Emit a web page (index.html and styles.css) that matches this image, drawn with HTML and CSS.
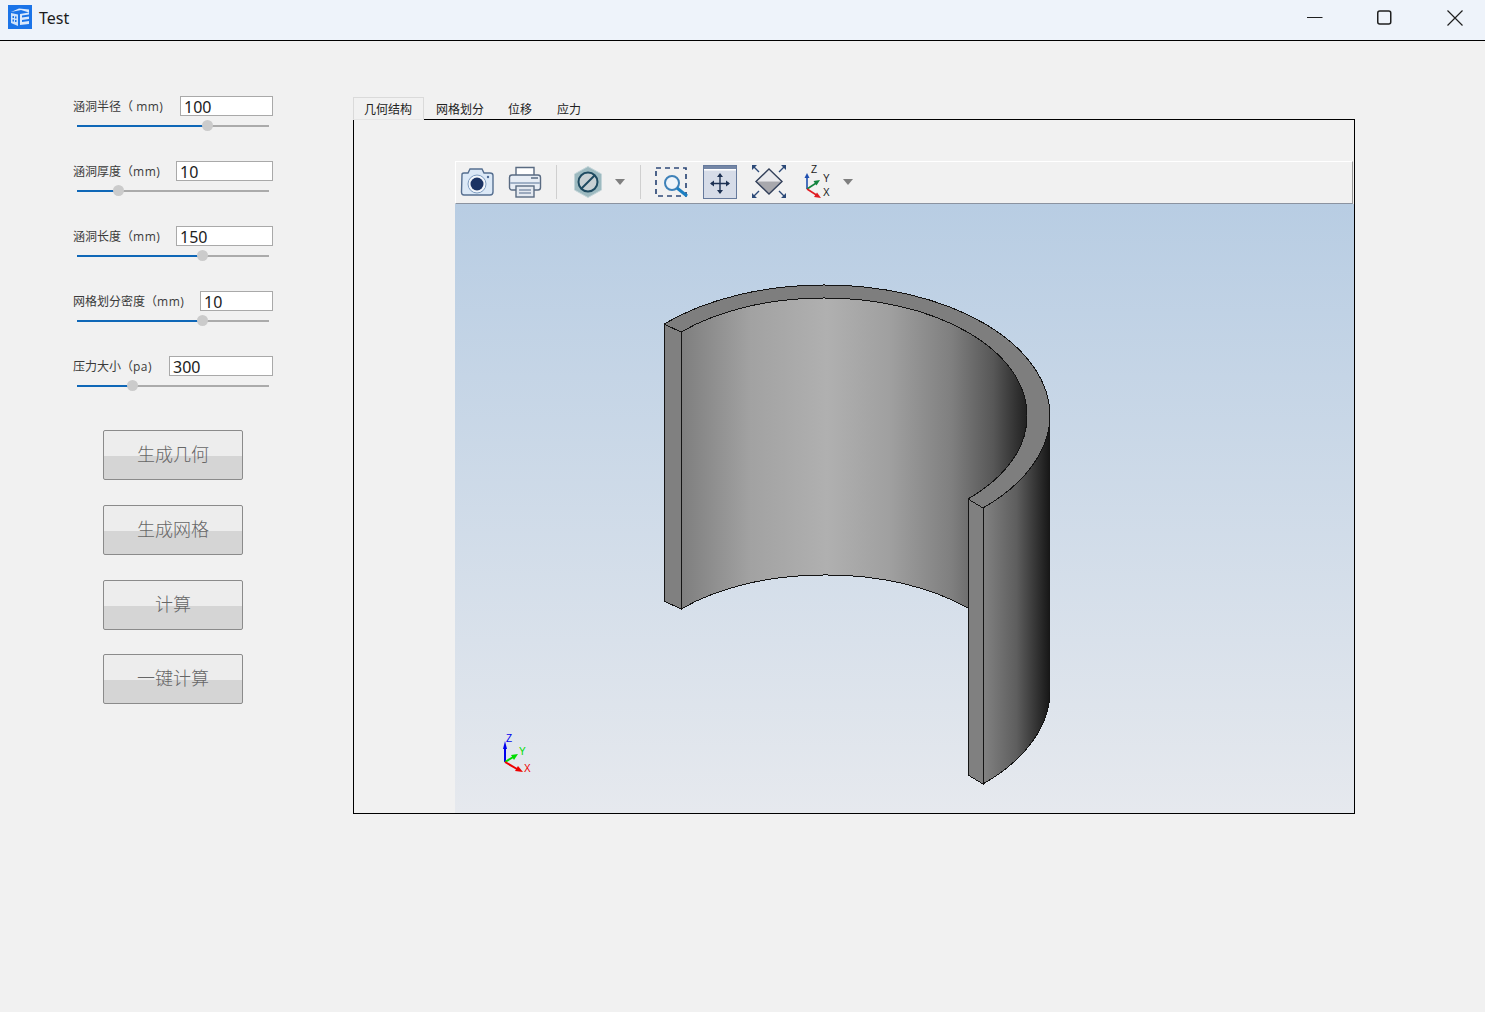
FILE: index.html
```html
<!DOCTYPE html>
<html lang="zh-CN">
<head>
<meta charset="utf-8">
<title>Test</title>
<link rel="stylesheet" href="styles.css">
</head>
<body>
<header class="titlebar">
  <svg class="app-icon" width="24" height="24" viewBox="0 0 24 24">
    <rect width="24" height="24" fill="#1b74e8"/>
    <path d="M3 7 11 3.500 21 4.500 21 7.500 12 9 12 20 21 19 21 16 14 17 14 15 21 14 21 11.500 14 12.500 14 10.500 21 9.500 21 7.500 13 5 3 7Z" fill="#dbe9fb"/>
    <path d="M3 8 10 9.500 10 21 3 18Z" fill="#cfe2fa"/>
    <path d="M4.500 11h1.500v2h-1.500zM7 11.500h1.500v2h-1.500zM4.500 14.500h1.500v2h-1.500zM7 15h1.500v2h-1.500z" fill="#1b74e8"/>
  </svg>
  <span class="app-title">Test</span>
  <div class="window-controls">
    <svg width="16" height="16" viewBox="0 0 16 16"><path d="M0 7.500H15.500" stroke="#1f1f1f" fill="none"/></svg>
    <svg width="16" height="16" viewBox="0 0 16 16"><rect x=".75" y="1" width="13" height="13" rx="2" stroke="#1f1f1f" stroke-width="1.500" fill="none"/></svg>
    <svg width="16" height="16" viewBox="0 0 16 16"><path d="M0.500 0.500 15.500 15.500M15.500 0.500 0.500 15.500" stroke="#1f1f1f" stroke-width="1.200" fill="none"/></svg>
  </div>
</header>

<main class="app">
  <aside class="sidebar">
    <section class="param">
      <div class="param-head"><label class="param-label">涵洞半径（ <span class="unit">mm)</span></label><span class="field field-a">100</span></div>
      <div class="slider"><span class="fill" style="width:130px"></span><span class="thumb"></span><span class="rest"></span></div>
    </section>
    <section class="param">
      <div class="param-head"><label class="param-label">涵洞厚度（<span class="unit">mm)</span></label><span class="field field-b">10</span></div>
      <div class="slider"><span class="fill" style="width:41px"></span><span class="thumb"></span><span class="rest"></span></div>
    </section>
    <section class="param">
      <div class="param-head"><label class="param-label">涵洞长度（<span class="unit">mm)</span></label><span class="field field-b">150</span></div>
      <div class="slider"><span class="fill" style="width:125px"></span><span class="thumb"></span><span class="rest"></span></div>
    </section>
    <section class="param">
      <div class="param-head"><label class="param-label">网格划分密度（<span class="unit">mm)</span></label><span class="field field-c">10</span></div>
      <div class="slider"><span class="fill" style="width:125px"></span><span class="thumb"></span><span class="rest"></span></div>
    </section>
    <section class="param">
      <div class="param-head"><label class="param-label">压力大小（<span class="unit">pa)</span></label><span class="field field-d">300</span></div>
      <div class="slider"><span class="fill" style="width:55px"></span><span class="thumb"></span><span class="rest"></span></div>
    </section>
    <div class="actions">
      <button class="action">生成几何</button>
      <button class="action">生成网格</button>
      <button class="action">计算</button>
      <button class="action action-last">一键计算</button>
    </div>
  </aside>

  <section class="workspace">
    <nav class="tabs">
      <span class="tab tab-active">几何结构</span>
      <span class="tab tab-b">网格划分</span>
      <span class="tab tab-c">位移</span>
      <span class="tab tab-d">应力</span>
    </nav>
    <div class="viewer">
      <div class="scene">
        <div class="toolbar">
          <svg class="tool t-camera" width="34" height="30" viewBox="0 0 34 30">
            <path d="M2 7.500Q2 6 4 6H8L10 2H22L24 6H30Q33 6 33 8.500V25Q33 28 30 28H4Q1.500 28 1.500 25Z" fill="#dce9f7" stroke="#566f90" stroke-width="1.400"/>
            <circle cx="17" cy="17" r="9" fill="#f2f6fb" stroke="#7f9dc0"/>
            <circle cx="17" cy="17" r="6.500" fill="#1b3364"/>
            <circle cx="28" cy="10" r="1.200" fill="#4d6a96"/>
          </svg>
          <svg class="tool t-printer" width="34" height="32" viewBox="0 0 34 32">
            <path d="M8 9V1.500H26V9" fill="#fff" stroke="#5a6b82" stroke-width="1.400"/>
            <rect x="1.500" y="9" width="31" height="15" rx="2.500" fill="#e7edf5" stroke="#5a6b82" stroke-width="1.400"/>
            <path d="M2 16H32V18H2Z" fill="#9fb0c6"/>
            <path d="M23 12H30" stroke="#5a6b82" stroke-width="1.500"/>
            <rect x="8" y="20" width="18" height="11" fill="#e4e9f0" stroke="#5a6b82" stroke-width="1.400"/>
            <path d="M11 24H23M11 27H23" stroke="#8294ac" stroke-width="1.300"/>
          </svg>
          <span class="tool-sep sep-a"></span>
          <svg class="tool t-hex" width="28" height="32" viewBox="0 0 28 32">
            <path d="M14 .5 27.500 8V24L14 31.500 .5 24V8Z" fill="#9dbac0" stroke="#c3d4d8"/>
            <circle cx="14" cy="16" r="9.500" fill="#c8d0d3" stroke="#1e4a60" stroke-width="2"/>
            <path d="M7.500 22.500 20.500 9.500" stroke="#1e4a60" stroke-width="2"/>
          </svg>
          <svg class="tool t-caret" width="10" height="6" viewBox="0 0 10 6"><path d="M0 0H10L5 6Z" fill="#7f7f7f"/></svg>
          <span class="tool-sep sep-b"></span>
          <svg class="tool t-zoom" width="34" height="32" viewBox="0 0 34 32">
            <rect x="1" y="2" width="30" height="28" fill="none" stroke="#2f4a78" stroke-width="1.700" stroke-dasharray="5 4"/>
            <circle cx="17" cy="17" r="7" fill="#eef4fa" stroke="#3e81b8" stroke-width="2"/>
            <path d="M22 22 32 30" stroke="#1b7fc2" stroke-width="3"/>
          </svg>
          <svg class="tool t-pan" width="34" height="34" viewBox="0 0 34 34">
            <rect x=".5" y=".5" width="33" height="33" fill="#d6dce8" stroke="#667a9c"/>
            <rect x="1" y="1" width="32" height="3" fill="#7587a6"/>
            <rect x="1" y="4" width="32" height="1.500" fill="#fff"/>
            <path d="M17 9V28M8 18.500H26" stroke="#1d3153" stroke-width="1.400"/>
            <path d="M17 8 14 12H20ZM17 29 14 25H20ZM7 18.500 11 15.500V21.500ZM27 18.500 23 15.500V21.500Z" fill="#1d3153"/>
          </svg>
          <svg class="tool t-fit" width="34" height="33" viewBox="0 0 34 33">
            <path d="M17 4 30 16.500H4Z" fill="#e9e9ec"/>
            <path d="M4 16.500H30L17 29Z" fill="#a8a8ad"/>
            <path d="M17 4 30 16.500 17 29 4 16.500Z" fill="none" stroke="#33405a" stroke-width="1.400"/>
            <path d="M1 1 7 7M33 1 27 7M1 32 7 26M33 32 27 26" stroke="#2c4a78" stroke-width="1.400"/>
            <path d="M0 0H5L0 5ZM34 0H29L34 5ZM0 33H5L0 28ZM34 33H29L34 28Z" fill="#2c4a78"/>
          </svg>
          <svg class="tool t-axes" width="30" height="34" viewBox="0 0 30 34">
            <path d="M3 24V10" stroke="#1f4fb0" stroke-width="1.600"/>
            <path d="M3 8 .5 13H5.500Z" fill="#1f4fb0"/>
            <path d="M3 24 13 17.500" stroke="#12843f" stroke-width="1.600"/>
            <path d="M16 15 9.500 16 12.500 20.500Z" fill="#12843f"/>
            <path d="M3 24 14 31" stroke="#e01b22" stroke-width="1.600"/>
            <path d="M17 33 10 32 13 27.500Z" fill="#e01b22"/>
            <text class="axis-label" x="7" y="8">Z</text>
            <text class="axis-label" x="19" y="17">Y</text>
            <text class="axis-label" x="19" y="31">X</text>
          </svg>
          <svg class="tool t-caret2" width="10" height="6" viewBox="0 0 10 6"><path d="M0 0H10L5 6Z" fill="#7f7f7f"/></svg>
        </div>
        <svg class="model" width="899" height="609" viewBox="455 204 899 609">
          <defs>
            <linearGradient id="inner" gradientUnits="userSpaceOnUse" x1="681" y1="0" x2="1028" y2="0">
              <stop offset="0" stop-color="#7e7e7e"/>
              <stop offset=".2" stop-color="#a2a2a2"/>
              <stop offset=".42" stop-color="#b0b0b0"/>
              <stop offset=".6" stop-color="#a0a0a0"/>
              <stop offset=".78" stop-color="#7f7f7f"/>
              <stop offset=".9" stop-color="#575757"/>
              <stop offset="1" stop-color="#1f1f1f"/>
            </linearGradient>
            <linearGradient id="outer" gradientUnits="userSpaceOnUse" x1="983" y1="0" x2="1050" y2="0">
              <stop offset="0" stop-color="#828282"/>
              <stop offset=".5" stop-color="#5e5e5e"/>
              <stop offset="1" stop-color="#161616"/>
            </linearGradient>
          </defs>
          <g class="solid">
            <path d="M968 499 1027 415 1050 416V692A225 131 0 0 1 983 784L968 775Z" fill="url(#outer)"/>
            <path d="M681 332A202 117 0 0 1 825 298A202 117 0 0 1 1027 415A202 117 0 0 1 968 499V608A202 117 0 0 0 825 575A202 117 0 0 0 681 609Z" fill="url(#inner)"/>
            <path d="M664 324A225 131 0 0 1 825 285A225 131 0 0 1 1050 416A225 131 0 0 1 983 508L968 499A202 117 0 0 0 1027 415A202 117 0 0 0 825 298A202 117 0 0 0 681 332Z" fill="#7e7e7e"/>
            <path d="M664 324 681 332V609L664 601Z" fill="#808080"/>
            <path d="M968 499 983 508V784L968 775Z" fill="#808080"/>
          </g>
          <g class="edges">
            <path d="M664 324A225 131 0 0 1 825 285A225 131 0 0 1 1050 416A225 131 0 0 1 983 508L968 499A202 117 0 0 0 1027 415A202 117 0 0 0 825 298A202 117 0 0 0 681 332Z"/>
            <path d="M664 324V601L681 609V332"/>
            <path d="M681 609A202 117 0 0 1 825 575A202 117 0 0 1 968 608"/>
            <path d="M968 499V775L983 784V508"/>
            <path d="M983 784A225 131 0 0 0 1050 692V416"/>
          </g>
          <path d="M505 762V746" stroke="#0000ee" stroke-width="2"/>
          <path d="M505 741 503 749H507Z" fill="#0000ee"/>
          <path d="M505 762 515 756" stroke="#00dd00" stroke-width="2"/>
          <path d="M518 754 511 755 514 760Z" fill="#00dd00"/>
          <path d="M505 762 517 769" stroke="#ee0000" stroke-width="2"/>
          <path d="M523 772 515 771 518 766Z" fill="#ee0000"/>
          <text class="mini-label z" x="506" y="742">Z</text>
          <text class="mini-label y" x="519" y="755">Y</text>
          <text class="mini-label x" x="524" y="772">X</text>
        </svg>
      </div>
    </div>
  </section>
</main>
</body>
</html>
```

FILE: styles.css
```css
* { box-sizing: border-box; }

html, body {
  margin: 0;
  height: 100%;
}

body {
  background: #f1f1f1;
  font-family: "Open Sans", "Noto Sans CJK SC", sans-serif;
  overflow: hidden;
}

.titlebar {
  display: flex;
  align-items: center;
  height: 41px;
  padding: 0 22px 6px 8px;
  background: #eef3fa;
  border-bottom: 1px solid #000;
}

.app-icon { display: block; }

.app-title {
  margin: 1px 0 0 7px;
  font: 16px "Noto Sans", "Open Sans", sans-serif;
  color: #1c1c1c;
}

.window-controls {
  display: flex;
  gap: 54px;
  margin-left: auto;
  padding-top: 2px;
}

.app {
  display: flex;
}

.sidebar {
  width: 353px;
  padding: 55px 0 0 73px;
  flex: none;
}

.param {
  width: 200px;
  height: 65px;
}

.param-head {
  display: flex;
  align-items: center;
  justify-content: space-between;
  height: 20px;
}

.param-label {
  padding-top: 2px;
  font-size: 12px;
  line-height: 20px;
  color: #3a3a3a;
  white-space: nowrap;
}

.unit { letter-spacing: .5px; }

.field {
  height: 20px;
  padding-left: 3px;
  background: #fff;
  border: 1px solid #a9a9a9;
  font: 16px/21px "Noto Sans", "Open Sans", sans-serif;
  color: #222;
}

.field-a { width: 93px; }
.field-b { width: 97px; }
.field-c { width: 73px; }
.field-d { width: 104px; }

.slider {
  display: flex;
  align-items: center;
  width: 192px;
  height: 11px;
  margin: 4px 0 0 4px;
}

.fill {
  height: 2px;
  background: #0f67b7;
}

.thumb {
  flex: none;
  width: 11px;
  height: 11px;
  margin: 0 -5px;
  border-radius: 50%;
  background: #cbcbcb;
  position: relative;
}

.rest {
  flex: 1;
  height: 2px;
  background: #ababab;
}

.actions {
  display: flex;
  flex-direction: column;
  gap: 25px;
  width: 140px;
  margin: 9px 0 0 30px;
}

.action {
  display: block;
  width: 140px;
  height: 50px;
  padding: 0 0 4px;
  border: 1px solid #8b8b8b;
  border-radius: 2px;
  background: linear-gradient(#ededed 0, #ededed 52%, #d5d5d5 52%, #d5d5d5 100%);
  font: 300 18px/26px "Noto Sans CJK SC", sans-serif;
  color: #666;
}

.action-last { margin-top: -1px; }

.workspace {
  flex: none;
  width: 1002px;
  padding-top: 55px;
}

.tabs {
  display: flex;
  height: 23px;
  padding-top: 1px;
  font: 12px/23px "Noto Sans CJK SC", sans-serif;
  color: #222;
}

.tab { white-space: nowrap; }

.tab-active {
  width: 71px;
  height: 23px;
  margin-right: 12px;
  padding-left: 10px;
  border: 1px solid #dadada;
  border-bottom-color: #e6e6e6;
  background: #f1f1f1;
  line-height: 21px;
  position: relative;
  z-index: 1;
}

.tab-b { margin-right: 24px; }
.tab-c { margin-right: 25px; }

.viewer {
  height: 695px;
  padding: 41px 0 0 101px;
  border: 1px solid #000;
}

.scene {
  width: 899px;
  height: 652px;
  background: linear-gradient(#f1f1f1 0, #f1f1f1 43px, #b8cde3 43px, #e6e9ee 100%);
}

.toolbar {
  display: flex;
  align-items: center;
  height: 43px;
  padding: 0 0 2px 4px;
  background: #f1f1f1;
  border-top: 1px solid #fff;
  border-left: 1px solid #fff;
  border-right: 1px solid #9a9a9a;
  border-bottom: 1px solid #8b93a0;
  margin-right: 1px;
}

.tool { display: block; flex: none; }

.tool-sep {
  flex: none;
  width: 1px;
  height: 34px;
  background: #cfcfcf;
}

.t-printer { margin-left: 14px; }
.sep-a { margin-left: 14px; }
.t-hex { margin-left: 17px; }
.t-caret { margin-left: 13px; }
.sep-b { margin-left: 15px; }
.t-zoom { margin-left: 14px; }
.t-pan { margin-left: 14px; }
.t-fit { margin-left: 15px; }
.t-axes { margin-left: 18px; }
.t-caret2 { margin-left: 9px; }

.axis-label {
  font: 10px "Liberation Sans", sans-serif;
  fill: #222;
}

.model { display: block; }

.solid path { shape-rendering: crispEdges; }

.edges path {
  fill: none;
  stroke: #141414;
  stroke-width: 1;
  shape-rendering: crispEdges;
}

.mini-label {
  font: 10px "Liberation Sans", sans-serif;
}

.mini-label.z { fill: #0000ee; }
.mini-label.y { fill: #00dd00; }
.mini-label.x { fill: #ee0000; }
```
